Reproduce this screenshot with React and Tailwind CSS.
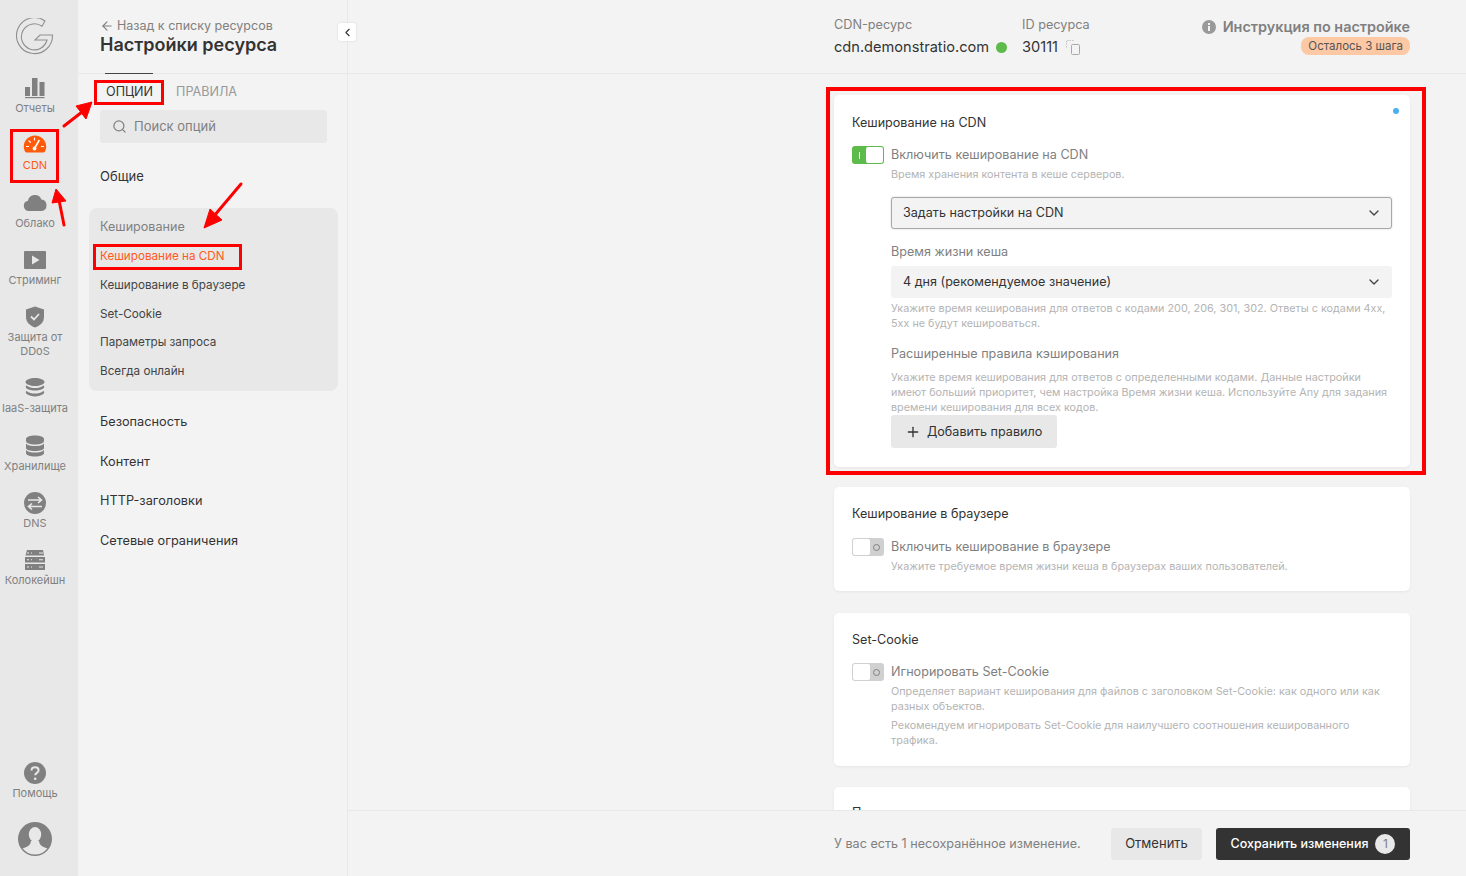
import { ChevronDown, ChevronLeft, ArrowLeft, Search, Plus } from 'lucide-react';

const GRAY = '#808080';

const BarsIcon = () => (
  <svg width="22" height="22" viewBox="0 0 22 22" fill={GRAY}>
    <rect x="1" y="10" width="5" height="9" />
    <rect x="8" y="1" width="5.500" height="18" />
    <rect x="15.500" y="5" width="5" height="14" />
    <rect x="1" y="20" width="19.500" height="1.200" />
  </svg>
);

const GaugeIcon = () => (
  <svg width="24" height="22" viewBox="0 0 24 22">
    <path d="M12 1.500C5.600 1.500 .8 6.500 .8 12.500c0 2 .5 3.800 1.400 5.300a1.600 1.600 0 0 0 1.400.7h16.800a1.600 1.600 0 0 0 1.400-.7c.9-1.500 1.400-3.300 1.400-5.300C23.200 6.500 18.400 1.500 12 1.500z" fill="#ff5a0a" />
    <path d="M11.500 14.500l4.500-8" stroke="#fff" strokeWidth="1.600" strokeLinecap="round" />
    <circle cx="11.500" cy="14.500" r="1.900" fill="#fff" />
    <path d="M3.500 12.500h2M6 7l1.400 1.300M11.500 4v2M18.500 12.500h2" stroke="#fff" strokeWidth="1.200" strokeLinecap="round" />
  </svg>
);

const CloudIcon = () => (
  <svg width="24" height="22" viewBox="0 0 24 22" fill={GRAY}>
    <path d="M6 19a5.200 5.200 0 0 1-1-10.300 7 7 0 0 1 13.400-1.200A5.800 5.800 0 0 1 18.500 19z" />
  </svg>
);

const PlayIcon = () => (
  <svg width="22" height="22" viewBox="0 0 22 22">
    <rect x="0" y="2" width="22" height="18" rx="1" fill={GRAY} />
    <path d="M8 6.500l7.500 4.500L8 15.500z" fill="#e8e8e8" />
  </svg>
);

const ShieldIcon = () => (
  <svg width="22" height="22" viewBox="0 0 22 22">
    <path d="M11 .5l9 3v7.500c0 5-3.500 8.500-9 10.500C5.500 19.500 2 16 2 11V3.500z" fill={GRAY} />
    <path d="M7 10.500l3 3 5-5.500" stroke="#e8e8e8" strokeWidth="1.800" fill="none" />
  </svg>
);

const LayersIcon = () => (
  <svg width="22" height="22" viewBox="0 0 22 22" fill={GRAY}>
    <path d="M11 1c5 0 9.500 2 9.500 4S16 9 11 9 1.500 7 1.500 5 6 1 11 1z" />
    <path d="M2.500 8.500C5 10.500 8 11 11 11s6-.5 8.500-2.500c1 .6 1 2-.2 3-2.300 1.600-5.300 2-8.300 2s-6-.4-8.300-2c-1.200-1-1.200-2.400-.2-3z" />
    <path d="M2.500 14c2.500 2 5.500 2.500 8.500 2.500s6-.5 8.500-2.500c1 .6 1 2-.2 3-2.300 1.600-5.300 2.500-8.300 2.500S5 18.600 2.700 17c-1.200-1-1.200-2.400-.2-3z" />
  </svg>
);

const DbIcon = () => (
  <svg width="22" height="22" viewBox="0 0 22 22" fill={GRAY}>
    <path d="M2 4c0-2 4-3.500 9-3.500S20 2 20 4v2c0 2-4 3.500-9 3.500S2 8 2 6z" />
    <path d="M2 8.500c1.500 2 5 2.500 9 2.500s7.500-.5 9-2.500V13c0 2-4 3-9 3s-9-1-9-3z" />
    <path d="M2 15c1.500 2 5 2.500 9 2.500s7.500-.5 9-2.500v3c0 2-4 3.500-9 3.500S2 20 2 18z" />
  </svg>
);

const DnsIcon = () => (
  <svg width="22" height="22" viewBox="0 0 22 22">
    <circle cx="11" cy="11" r="11" fill={GRAY} />
    <path d="M4 8h13M14 5l3.500 3L14 11M18 14.500H5M8 11.500l-3.500 3L8 17.500" stroke="#e8e8e8" strokeWidth="1.600" fill="none" />
  </svg>
);

const ServerIcon = () => (
  <svg width="22" height="22" viewBox="0 0 22 22" fill={GRAY}>
    <path d="M3 1h16l1 5.500H1.500z" />
    <rect x="1" y="8" width="20" height="5.500" />
    <rect x="1" y="15" width="20" height="6" />
    <path d="M3 4h2M7 4h1M15 4h4M3 10.700h2M7 10.700h1M15 10.700h4M3 18h2M7 18h1M15 18h4" stroke="#e8e8e8" strokeWidth="1.100" />
  </svg>
);

const HelpIcon = () => (
  <svg width="22" height="22" viewBox="0 0 22 22">
    <circle cx="11" cy="11" r="11" fill={GRAY} />
    <path d="M7.500 8.500c0-2 1.600-3.300 3.600-3.300s3.500 1.300 3.500 3c0 2.700-3.400 2.500-3.400 5" stroke="#e8e8e8" strokeWidth="2" fill="none" />
    <circle cx="11.200" cy="16.700" r="1.300" fill="#e8e8e8" />
  </svg>
);

const Logo = () => (
  <svg width="38" height="38" viewBox="0 0 38 38" fill="none" stroke="#909090" strokeWidth="1.100">
    <path d="M29 3A18 18 0 1 0 36.500 17H24L19 22H31A13 13 0 1 1 26 8.300z" />
  </svg>
);

const Avatar = () => (
  <svg width="34" height="34" viewBox="0 0 34 34">
    <defs>
      <clipPath id="avatar-clip">
        <circle cx="17" cy="17" r="15.500" />
      </clipPath>
    </defs>
    <circle cx="17" cy="17" r="17" fill={GRAY} />
    <g clipPath="url(#avatar-clip)">
      <ellipse cx="17" cy="12.500" rx="6.200" ry="7.500" fill="#e8e8e8" />
      <path d="M0 34V28.500C6 25.500 12.500 25 13 19h8c.5 6 7 6.500 13 9.500V34z" fill="#e8e8e8" />
    </g>
  </svg>
);

const CopyIcon = () => (
  <svg width="14" height="15" viewBox="0 0 14 15" fill="none" stroke="#c4c4c4" strokeWidth="1">
    <path d="M7.500 .5H.5V8" strokeDasharray="1.500 1" />
    <rect x="5.500" y="4.500" width="8" height="10" rx="1" stroke="#a8a8a8" />
  </svg>
);

const InfoDot = () => (
  <svg width="14" height="14" viewBox="0 0 14 14">
    <circle cx="7" cy="7" r="7" fill="#999" />
    <rect x="6" y="6" width="2" height="5" fill="#f3f3f3" />
    <rect x="6" y="3" width="2" height="2" fill="#f3f3f3" />
  </svg>
);

const navItems = [
  { label: 'Отчеты', icon: <BarsIcon /> },
  { label: 'CDN', icon: <GaugeIcon />, active: true },
  { label: 'Облако', icon: <CloudIcon /> },
  { label: 'Стриминг', icon: <PlayIcon /> },
  { label: 'Защита от DDoS', icon: <ShieldIcon /> },
  { label: 'IaaS-защита', icon: <LayersIcon /> },
  { label: 'Хранилище', icon: <DbIcon /> },
  { label: 'DNS', icon: <DnsIcon /> },
  { label: 'Колокейшн', icon: <ServerIcon /> },
];

function NavItem({ label, icon, active }) {
  return (
    <div className="flex flex-col items-center">
      <div className="h-[22px] flex items-center justify-center">{icon}</div>
      <div className={`mt-[2px] text-[11px] leading-[14px] text-center w-[70px] ${active ? 'text-[#ff5a0a]' : 'text-[#808080]'}`}>
        {label}
      </div>
    </div>
  );
}

function Toggle({ on }) {
  if (on) {
    return (
      <div className="w-[32px] h-[18px] rounded-[3px] bg-[#5cbb4b] flex items-center p-[1px] shrink-0">
        <div className="w-[13px] flex justify-center">
          <div className="w-[1px] h-[7px] bg-white" />
        </div>
        <div className="w-[17px] h-[16px] rounded-[2px] bg-white" />
      </div>
    );
  }
  return (
    <div className="w-[32px] h-[18px] rounded-[3px] bg-[#d0d0d0] flex items-center p-[1px] shrink-0">
      <div className="w-[17px] h-[16px] rounded-[2px] bg-white" />
      <div className="w-[13px] flex justify-center">
        <div className="w-[7px] h-[7px] rounded-full border border-[#808080]" />
      </div>
    </div>
  );
}

function Card({ title, children, className = '' }) {
  return (
    <div className={`relative bg-white rounded-[5px] shadow-[0_1px_3px_rgba(0,0,0,0.06)] px-[18px] ${className}`}>
      <div className="text-[12.600px] leading-[18px] text-[#333]">{title}</div>
      {children}
    </div>
  );
}

function ToggleRow({ on, label }) {
  return (
    <div className="flex items-center gap-[7px] h-[18px]">
      <Toggle on={on} />
      <span className="text-[12.600px] text-[#808080]">{label}</span>
    </div>
  );
}

function Select({ value, bordered }) {
  return (
    <div className={`h-[32px] rounded-[3px] bg-[#f3f3f3] flex items-center justify-between text-[12.600px] text-[#333] ${bordered ? 'pl-[11px] pr-[9px] border border-[#a8a8a8] shadow-[0_0_2px_rgba(0,0,0,0.2)]' : 'pl-[12px] pr-[10px]'}`}>
      {value}
      <ChevronDown size={16} color="#444" />
    </div>
  );
}

function App() {
  return (
    <div className="relative w-[1466px] h-[876px] overflow-hidden flex bg-[#f3f3f3] font-[Inter,sans-serif]">
      {/* левая панель */}
      <aside className="w-[78px] shrink-0 bg-[#e8e8e8] flex flex-col items-center pr-[8px] pb-[20px]">
        <div className="h-[77px] pt-[18px] shrink-0">
          <Logo />
        </div>
        <div className="flex flex-col gap-[19.250px]">
          {navItems.map((item) => (
            <NavItem key={item.label} {...item} />
          ))}
        </div>
        <div className="mt-auto flex flex-col items-center gap-[22px]">
          <NavItem label="Помощь" icon={<HelpIcon />} />
          <Avatar />
        </div>
      </aside>

      {/* меню опций */}
      <aside className="w-[270px] shrink-0 border-r border-[#e8e8e8]">
        <div className="h-[74px] border-b border-[#e8e8e8] pl-[22px] pt-[18px]">
          <div className="flex items-center gap-[3px] text-[12.500px] leading-[15px] text-[#808080]">
            <ArrowLeft size={14} />
            Назад к списку ресурсов
          </div>
          <div className="text-[18px] leading-[24px] font-semibold text-[#333]">Настройки ресурса</div>
        </div>
        <div className="relative flex gap-[23px] pl-[28px] h-[36px] items-center text-[12.600px]">
          <span className="text-[#333]">ОПЦИИ</span>
          <span className="text-[#999]">ПРАВИЛА</span>
          <div className="absolute left-[27px] top-0 -mt-[1px] w-[48px] h-[1px] bg-[#444]" />
        </div>
        <div className="ml-[22px] w-[227px] h-[33px] bg-[#e8e8e8] rounded-[3px] flex items-center pl-[12px] gap-[7px] text-[13px] text-[#808080]">
          <Search size={15} />
          Поиск опций
        </div>
        <div className="pl-[22px] mt-[24px] h-[18px] text-[13px] leading-[18px] text-[#333]">Общие</div>
        <div className="ml-[11px] mt-[23px] w-[249px] h-[183px] bg-[#e8e8e8] rounded-[8px] pl-[11px] pt-[10px]">
          <div className="text-[12.600px] leading-[18px] text-[#808080]">Кеширование</div>
          <div className="mt-[13px] flex flex-col gap-[13.800px] text-[11.700px] leading-[15px] text-[#444]">
            <div className="text-[#ff5a1f]">Кеширование на CDN</div>
            <div>Кеширование в браузере</div>
            <div>Set-Cookie</div>
            <div>Параметры запроса</div>
            <div>Всегда онлайн</div>
          </div>
        </div>
        <div className="pl-[22px] mt-[22px] flex flex-col gap-[21.600px] text-[12.750px] leading-[18px] text-[#333]">
          <div>Безопасность</div>
          <div>Контент</div>
          <div>HTTP-заголовки</div>
          <div>Сетевые ограничения</div>
        </div>
      </aside>

      {/* основная часть */}
      <main className="flex-1 flex flex-col min-w-0">
        <header className="h-[74px] shrink-0 border-b border-[#e8e8e8] pl-[486px] pr-[56px] pt-[16px] flex">
          <div>
            <div className="text-[12.700px] leading-[18px] text-[#808080]">CDN-ресурс</div>
            <div className="mt-[3px] flex items-center gap-[7px] text-[14.600px] leading-[20px] text-[#333]">
              cdn.demonstratio.com
              <span className="w-[11px] h-[11px] rounded-full bg-[#5cbb4b]" />
            </div>
          </div>
          <div className="ml-[15px]">
            <div className="text-[12.700px] leading-[18px] text-[#808080]">ID ресурса</div>
            <div className="mt-[3px] flex items-center gap-[8px] text-[14.600px] leading-[20px] text-[#333]">
              30111
              <CopyIcon />
            </div>
          </div>
          <div className="ml-auto flex flex-col items-end pt-[2px]">
            <div className="flex items-center gap-[7px] text-[14.400px] leading-[18px] font-semibold text-[#808080]">
              <InfoDot />
              Инструкция по настройке
            </div>
            <div className="mt-[1px] h-[18px] px-[7px] rounded-[8px] bg-[#fdc8a4] text-[11.500px] leading-[18px] text-[#555]">
              Осталось 3 шага
            </div>
          </div>
        </header>

        <div className="flex-1 min-h-0 overflow-hidden pl-[486px] pr-[56px] pt-[21px] flex flex-col">
          <Card title="Кеширование на CDN" className="h-[372px] shrink-0 pt-[19px]">
            <span className="absolute right-[11px] top-[13px] w-[6px] h-[6px] rounded-full bg-[#4ab0f0]" />
            <div className="mt-[14px]">
              <ToggleRow on label="Включить кеширование на CDN" />
            </div>
            <div className="pl-[39px]">
              <p className="mt-[3px] text-[10.800px] leading-[15px] text-[#b4b4b4]">Время хранения контента в кеше серверов.</p>
              <div className="mt-[15px] w-[501px]">
                <Select value="Задать настройки на CDN" bordered />
              </div>
              <div className="mt-[14px] text-[12.600px] leading-[18px] text-[#808080]">Время жизни кеша</div>
              <div className="mt-[5px] w-[501px]">
                <Select value="4 дня (рекомендуемое значение)" />
              </div>
              <p className="mt-[3px] w-[501px] text-[10.800px] leading-[15px] text-[#b4b4b4]">
                Укажите время кеширования для ответов с кодами 200, 206, 301, 302. Ответы с кодами 4xx, 5xx не будут кешироваться.
              </p>
              <div className="mt-[14px] text-[12.600px] leading-[18px] text-[#808080]">Расширенные правила кэширования</div>
              <p className="mt-[7px] w-[501px] text-[10.800px] leading-[15px] text-[#b4b4b4]">
                Укажите время кеширования для ответов с определенными кодами. Данные настройки имеют больший приоритет, чем настройка Время жизни кеша. Используйте Any для задания времени кеширования для всех кодов.
              </p>
              <button className="w-[166px] h-[33px] rounded-[3px] bg-[#e8e8e8] flex items-center gap-[6px] pl-[14px] pt-[1px] text-[12.600px] text-[#333]">
                <Plus size={16} />
                Добавить правило
              </button>
            </div>
          </Card>

          <Card title="Кеширование в браузере" className="h-[104px] shrink-0 mt-[20px] pt-[18px]">
            <div className="mt-[15px]">
              <ToggleRow label="Включить кеширование в браузере" />
            </div>
            <p className="mt-[3px] pl-[39px] text-[10.800px] leading-[15px] text-[#b4b4b4]">
              Укажите требуемое время жизни кеша в браузерах ваших пользователей.
            </p>
          </Card>

          <Card title="Set-Cookie" className="h-[153px] shrink-0 mt-[22px] pt-[18px]">
            <div className="mt-[14px]">
              <ToggleRow label="Игнорировать Set-Cookie" />
            </div>
            <div className="pl-[39px] w-[540px]">
              <p className="mt-[3px] text-[10.800px] leading-[15px] text-[#b4b4b4]">
                Определяет вариант кеширования для файлов с заголовком Set-Cookie: как одного или как разных объектов.
              </p>
              <p className="mt-[4px] text-[10.800px] leading-[15px] text-[#b4b4b4]">
                Рекомендуем игнорировать Set-Cookie для наилучшего соотношения кешированного трафика.
              </p>
            </div>
          </Card>

          <Card title="Параметры запроса" className="h-[100px] shrink-0 mt-[21px] pt-[17px]" />
        </div>

        <footer className="relative h-[66px] shrink-0 border-t border-[#e8e8e8] bg-[#f3f3f3] pl-[486px] pr-[56px] flex items-center">
          <span className="pt-[1px] text-[12.600px] text-[#808080]">У вас есть 1 несохранённое изменение.</span>
          <button className="ml-auto w-[91px] h-[32px] rounded-[3px] bg-[#e8e8e8] text-[13px] text-[#333]">Отменить</button>
          <button className="ml-[14px] w-[194px] h-[32px] rounded-[3px] bg-[#333] text-[12.500px] font-medium text-white flex items-center justify-center gap-[7px]">
            <span className="pt-[1px]">Сохранить изменения</span>
            <span className="w-[20px] h-[20px] rounded-full bg-[#e8e8e8] text-[#808080] text-[12px] leading-[20px] font-normal">1</span>
          </button>
        </footer>
      </main>

      {/* кнопка сворачивания */}
      <div className="absolute left-[338px] top-[23px] w-[18px] h-[18px] rounded-[3px] bg-white shadow-[0_0_2px_rgba(0,0,0,0.15)] flex items-center justify-center">
        <ChevronLeft size={13} color="#333" />
      </div>

      {/* красные пометки */}
      <div className="absolute left-[94px] top-[80px] w-[70px] h-[25px] border-[3px] border-[#ff0000] pointer-events-none" />
      <div className="absolute left-[10px] top-[129px] w-[49px] h-[54px] border-[3px] border-[#ff0000] pointer-events-none" />
      <div className="absolute left-[93px] top-[244px] w-[149px] h-[26px] border-[3px] border-[#ff0000] pointer-events-none" />
      <div className="absolute left-[826px] top-[87px] w-[600px] h-[388px] border-[4px] border-[#ff0000] pointer-events-none" />
      <svg className="absolute left-0 top-0 pointer-events-none" width="300" height="260" fill="#ff0000" stroke="#ff0000">
        <path d="M64 126L82 112" strokeWidth="3" strokeLinecap="round" fill="none" />
        <path d="M92 102L76 106L86 119z" />
        <path d="M64 225L59 200" strokeWidth="3" strokeLinecap="round" fill="none" />
        <path d="M56 189L52 203L66 201z" />
        <path d="M241 184L214 216" strokeWidth="3" strokeLinecap="round" fill="none" />
        <path d="M204 228L222 220L210 209z" />
      </svg>
    </div>
  );
}

export default App;
